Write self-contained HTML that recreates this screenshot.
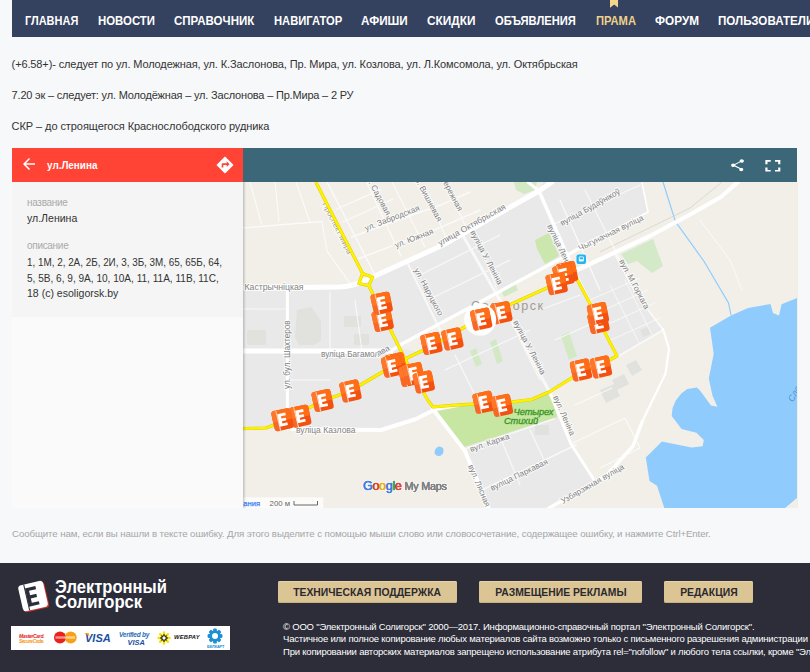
<!DOCTYPE html>
<html lang="ru">
<head>
<meta charset="utf-8">
<title>Электронный Солигорск</title>
<style>
*{margin:0;padding:0;box-sizing:border-box}
html,body{width:810px;height:672px;overflow:hidden;background:#f7f8fa;font-family:"Liberation Sans",sans-serif}
.abs{position:absolute}
#nav{position:absolute;left:12px;top:0;width:798px;height:36.500px;background:#35425f}
#nav span{position:absolute;transform-origin:0 50%;top:13px;font-weight:bold;font-size:13px;line-height:16px;color:#fff;white-space:nowrap}
#nav span.act{color:#eed08c}
.txt{position:absolute;left:11.600px;font-size:11px;line-height:14px;color:#333;white-space:nowrap;letter-spacing:-0.12px}
#mhead-l{position:absolute;left:12px;top:148px;width:231px;height:34px;background:#ff4436}
#mhead-r{position:absolute;left:243px;top:148px;width:554.300px;height:34px;background:#3b6778}
#side{position:absolute;left:12px;top:182px;width:231px;height:325.500px;background:#fafafa;z-index:2}
#sh{position:absolute;left:243px;top:182px;width:3px;height:326px;background:linear-gradient(to right,rgba(0,0,0,.2),rgba(0,0,0,0));z-index:2}
#mhead-l{z-index:3}
#panel{z-index:3;position:absolute;left:12px;top:182px;width:231px;height:135px;background:#f5f5f5}
#map{position:absolute;left:243px;top:182px;width:554.700px;height:326px;background:#f1eee6;overflow:hidden}
#notice{position:absolute;left:12px;top:527.700px;font-size:9.7px;line-height:12px;color:#a6a6a6;white-space:nowrap;letter-spacing:-0.108px}
#footer{position:absolute;left:0;top:563.300px;width:810px;height:109px;background:#2c2d39}
.btn span{display:inline-block;transform:scaleX(0.9);transform-origin:50% 50%}
.btn{position:absolute;top:18px;height:22px;background:#dcc594;color:#2b2930;font-weight:bold;font-size:11.500px;line-height:22.500px;border-radius:2px;box-shadow:inset 0 1px 0 #e6d3a8, inset 0 -1px 0 #c9b07c;text-align:center;white-space:nowrap}
.copy{position:absolute;left:283px;font-size:9.5px;line-height:12px;color:#fff;white-space:nowrap;letter-spacing:-0.2px}
#mtitle{transform:scaleX(.9);transform-origin:0 50%;position:absolute;left:35px;top:9px;font-size:11px;line-height:16px;font-weight:bold;color:#fff;white-space:nowrap}
.lbl{position:absolute;left:15px;font-size:10px;line-height:14px;color:#aaa;white-space:nowrap;letter-spacing:-.3px}
.val{position:absolute;left:15px;font-size:11px;line-height:14px;color:#333;white-space:nowrap;transform-origin:0 50%}
#lg1,#lg2{position:absolute;left:55.200px;font-size:17.500px;line-height:18px;font-weight:bold;color:#fff;white-space:nowrap;transform-origin:0 50%}
#lg1{top:14.400px;transform:scaleX(.947)}#lg2{top:29.600px;transform:scaleX(.95)}
#pay{position:absolute;left:11px;top:62.500px;width:219px;height:24.500px;background:#fff;overflow:hidden}
#pay div{white-space:nowrap}
.pt{font-weight:bold;font-style:italic;transform-origin:0 50%}
</style>
</head>
<body>
<div id="nav">
<svg class="abs" style="left:597.900px;top:0" width="8.400" height="7.800" viewBox="0 0 8.400 7.800"><path d="M0 0h8.400v7.800l-4.200-3.400l-4.200 3.400z" fill="#f3d58e"/></svg>
<span style="left:13.0px;transform:scaleX(0.845)">ГЛАВНАЯ</span>
<span style="left:86.0px;transform:scaleX(0.877)">НОВОСТИ</span>
<span style="left:162.0px;transform:scaleX(0.886)">СПРАВОЧНИК</span>
<span style="left:262.0px;transform:scaleX(0.862)">НАВИГАТОР</span>
<span style="left:349.0px;transform:scaleX(0.900)">АФИШИ</span>
<span style="left:415.3px;transform:scaleX(0.910)">СКИДКИ</span>
<span style="left:483.0px;transform:scaleX(0.859)">ОБЪЯВЛЕНИЯ</span>
<span style="left:584.0px;transform:scaleX(0.860)" class="act">ПРАМА</span>
<span style="left:643.0px;transform:scaleX(0.905)">ФОРУМ</span>
<span style="left:706.3px;transform:scaleX(0.892)">ПОЛЬЗОВАТЕЛИ</span>
</div>
<div class="txt" style="top:57px">(+6.58+)- следует по ул. Молодежная, ул. К.Заслонова, Пр. Мира, ул. Козлова, ул. Л.Комсомола, ул. Октябрьская</div>
<div class="txt" style="top:88px;letter-spacing:-.19px">7.20 эк – следует: ул. Молодёжная – ул. Заслонова – Пр.Мира – 2 РУ</div>
<div class="txt" style="top:119px;letter-spacing:-.075px">СКР – до строящегося Краснослободского рудника</div>
<div id="mhead-l">
<svg class="abs" style="left:7.900px;top:7.400px" width="18" height="18" viewBox="0 0 24 24"><path d="M20 11H7.83l5.59-5.59L12 4l-8 8 8 8 1.41-1.41L7.83 13H20v-2z" fill="#fff"/></svg>
<div id="mtitle">ул.Ленина</div>
<svg class="abs" style="left:203.300px;top:7px" width="20" height="20" viewBox="0 0 24 24"><path d="M21.71 11.29l-9-9a.996.996 0 0 0-1.410 0l-9 9a.996.996 0 0 0 0 1.410l9 9c.39.39 1.020.39 1.410 0l9-9a.996.996 0 0 0 0-1.410zM14 14.500V12h-4v3H8v-4c0-.55.45-1 1-1h5V7.500l3.500 3.500-3.500 3.500z" fill="#fff"/></svg>
</div>
<div id="mhead-r">
<svg class="abs" style="left:485.800px;top:10.400px" width="17" height="14.400" viewBox="0 0 24 24" preserveAspectRatio="none"><path d="M18 16.080c-.76 0-1.440.3-1.960.77L8.910 12.700c.05-.23.090-.46.090-.7s-.04-.47-.09-.7l7.050-4.110c.54.5 1.250.81 2.040.81 1.660 0 3-1.340 3-3s-1.340-3-3-3-3 1.340-3 3c0 .24.040.47.090.7L8.040 9.810C7.500 9.310 6.790 9 6 9c-1.660 0-3 1.340-3 3s1.340 3 3 3c.79 0 1.500-.31 2.040-.81l7.120 4.160c-.5.21-.8.430-.8.650 0 1.610 1.310 2.920 2.920 2.920 1.610 0 2.920-1.310 2.920-2.920s-1.310-2.920-2.920-2.920z" fill="#fff"/></svg>
<svg class="abs" style="left:517.250px;top:7.650px" width="25.700" height="19.700" viewBox="0 0 24 24" preserveAspectRatio="none"><path d="M7 14H5v5h5v-2H7v-3zm-2-4h2V7h3V5H5v5zm12 7h-3v2h5v-5h-2v3zM14 5v2h3v3h2V5h-5z" fill="#fff"/></svg>
</div>
<div id="side"></div><div id="sh"></div>
<div id="panel">
<div class="lbl" style="top:13.500px">название</div>
<div class="val" style="top:29px;transform:scaleX(.958)">ул.Ленина</div>
<div class="lbl" style="top:57px">описание</div>
<div class="val" style="top:72.500px;transform:scaleX(.897)">1, 1М, 2, 2А, 2Б, 2И, 3, 3Б, 3М, 65, 65Б, 64,</div>
<div class="val" style="top:88.500px;transform:scaleX(.915)">5, 5В, 6, 9, 9А, 10, 10А, 11, 11А, 11В, 11С,</div>
<div class="val" style="top:104px;transform:scaleX(.958)">18 (с) esoligorsk.by</div>
</div>
<div id="map">
<svg width="554" height="326" viewBox="243 182 554 326" style="display:block;font-family:'Liberation Sans',sans-serif">
<defs>
<g id="mk"><g transform="rotate(-12)">
<rect x="-9.750" y="-10.250" width="19.500" height="20.500" rx="3" fill="#f4500f"/>
<path d="M-9.750 1V-7.250a3 3 0 0 1 3 -3h13.500a3 3 0 0 1 3 3V1z" fill="#ff6d16"/>
<path d="M-9.750 -7.250a3 3 0 0 1 3 -3h1.900l.5 20.500h-2.400a3 3 0 0 1 -3 -3z" fill="#ff8a45" opacity=".4"/>
<path d="M-5.100 -10.250h.7l.9 20.500h-1.100z" fill="#fff1e6" opacity=".85"/>
<path d="M-4 -6.400h8.200v2.800h-5v2.300h4.500v2.600h-4.500v2.300h5v2.800h-8.200z" fill="#fff"/>
</g></g>
</defs>
<rect x="243" y="182" width="554" height="326" fill="#f2efe9"/>
<path d="M243 290 L352 288 L366 282 L443 247 L539 193 L543 182 L642 182 L648 212 L610 231 L576 250 L582 267 L615 252 L635 292 L663 330 L617 357 L606 362 L549 391 L571 444 L596 483 L549 508 L488 508 L465 451 L435 410 L416 420 L381 430 L243 429 Z" fill="#e9e9e9"/>
<path d="M398 348 L576 250 L582 267 L549 285 L420 352 Z" fill="#f2efe9"/>
<g fill="#e1e1de"><path d="M297 310l14-3 10 14v20l-8 4h-14l-4-8z"/><rect x="247" y="330" width="19" height="15" rx="2"/><rect x="344" y="316" width="17" height="11" rx="1"/><rect x="354" y="334" width="15" height="11" rx="1"/><path d="M626 365l10-5 6 10-10 6z M612 380l12-6 5 10-12 6z M640 330l8-3 3 7-8 3z M600 390l14-6 6 12-14 7z"/><rect x="535" y="425" width="14" height="10"/></g>
<g fill="#d3e9c6">
<path d="M535 240 L549 233 L559 256 L545 264 L537 249 Z" fill="#cbe7ae"/>
<path d="M621 254 L653 239 L663 266 L652 273 L637 261 L628 264 Z" fill="#d3e9c8"/>
<path d="M514 182 L537 182 L535 190 L524 194 L516 190 Z"/>
<path d="M470 351 L476 348 L482 364 L476 367 Z"/>
<path d="M490 342 L496 339 L503 361 L497 364 Z"/>
<path d="M561 336 L569 332 L577 356 L569 360 Z"/>
<path d="M501 290 L515 283 L518 290 L504 297 Z"/>
</g>
<path d="M433 410 L458 406 L507 403.500 L532 400.500 L551 392.500 L557 417 L464 447 L437 412 Z" fill="#c6e6a2"/>
<path d="M797 298 L781.600 304.300 L779 315.500 L773 313 L770.500 304 L748 308 L731 315.500 L710 327.800 L713.700 353.700 L708.800 378.400 L712.500 395.700 L717.400 406.800 L711 405.600 L700 390.400 L697 387.600 L687.400 388.900 L681.500 393.300 L675.600 400.700 L672.600 408 L671.700 416 L681.600 429 L696.400 432.700 L703.800 440 L702.600 446.300 L691.500 447.600 L661.900 441.400 L645.800 457.400 L649.500 480.900 L657 485.800 L664.300 508 L785 508 L797 498 Z" fill="#8fccfd"/>
<path d="M435 450 q3 -6 8 -2 q2 5 -3 8 q-7 0 -5 -6z" fill="#8fccfd"/>
<path d="M663 182 L675.400 221.500 L703.800 261 L728.500 303 L731 315" fill="none" stroke="#8fccfd" stroke-width="1.200"/>
<path d="M600 252 L690 208 L722 182" fill="none" stroke="#dcd9d2" stroke-width="1"/>
<g fill="none" stroke="#fff" stroke-linecap="round" stroke-linejoin="round" opacity=".72">
<path d="M250 182 L261.500 224" stroke-width="1.2"/>
<path d="M275 182 L279 221" stroke-width="1.2"/>
<path d="M296 182 L309.700 221.500" stroke-width="1.2"/>
<path d="M243 228 L322 221.500" stroke-width="1.5"/>
<path d="M322 222.700 L327 251 L351.600 285.700" stroke-width="1.2"/>
<path d="M327 182 L374 273" stroke-width="1.5"/>
<path d="M336.800 209 L381 189.400" stroke-width="1.3"/>
<path d="M343 222 L393 199" stroke-width="1.3"/>
<path d="M351.600 237 L443 204 L470 192" stroke-width="1.5"/>
<path d="M359 258.500 L443 226.400 L480 210" stroke-width="1.5"/>
<path d="M366.500 182 L401 256" stroke-width="1.5"/>
<path d="M392 182 L425 247" stroke-width="1.2"/>
<path d="M416 182 L438 219 L447 240" stroke-width="1.5"/>
<path d="M443 182 L460 214 L468 232" stroke-width="1.5"/>
<path d="M407 262 L440 330" stroke-width="2"/>
<path d="M462 234 L509.500 317 L549 391" stroke-width="3"/>
<path d="M615 254 L635 292 L663 330" stroke-width="2"/>
<path d="M663 330 L617 357" stroke-width="2"/>
<path d="M465 449 L554 419" stroke-width="1.6"/>
<path d="M482 490 L576 445" stroke-width="1.6"/>
<path d="M500 437 L520 485" stroke-width="1.2"/>
<path d="M530 430 L545 462" stroke-width="1.2"/>
<path d="M571 444 L625 418 L640 448 L600 468" stroke-width="1.2"/>
<path d="M575 405 L612 388" stroke-width="1.2"/>
<path d="M243 309 L287 309" stroke-width="1.2"/>
<path d="M287 380 L330 380" stroke-width="1.2"/>
<path d="M330 292 L330 351" stroke-width="1.2"/>
<path d="M355 300 L362 351" stroke-width="1.2"/>
<path d="M420 275 L500 235" stroke-width="1.2"/>
<path d="M432 298 L510 260" stroke-width="1.2"/>
<path d="M480 245 L497 290" stroke-width="1.2"/>
<path d="M560 200 L600 290" stroke-width="1.5"/>
<path d="M585 190 L625 270" stroke-width="1.2"/>
<path d="M552 225 L640 185" stroke-width="1.2"/>
<path d="M590 300 L640 278" stroke-width="1"/>
<path d="M597 313 L648 290" stroke-width="1"/>
<path d="M604 326 L655 303" stroke-width="1"/>
<path d="M611 340 L660 318" stroke-width="1"/>
<path d="M610 285 L640 345" stroke-width="1"/>
<path d="M625 280 L652 335" stroke-width="1"/>
<path d="M455 355 L475 395" stroke-width="1.2"/>
<path d="M520 340 L540 380" stroke-width="1.2"/>
<path d="M445 370 L530 330" stroke-width="1.2"/>
<path d="M540 310 L580 295" stroke-width="1.2"/>
<path d="M555 340 L600 320" stroke-width="1.2"/>
<path d="M700 220 L730 260 L742 290" stroke-width="1"/>
</g>
<g fill="none" stroke="#fff" stroke-linecap="round" stroke-linejoin="round">
<path d="M243 288 L340 287 Q355 286 366 280 L443 245 L539 191 L552 182" stroke-width="5"/>
<path d="M539 191 L528 182" stroke-width="3"/>
<path d="M539 191 L575 273 L591 305 L617 356" stroke-width="3.5"/>
<path d="M391 351 L400 345 L571 253 L600 237" stroke-width="3.2"/>
<path d="M600 237 L648 212 L642 183" stroke-width="1.6"/>
<path d="M573 272 L650 236 L691 214 L721 197 L738 182" stroke-width="4.2"/>
<path d="M243 351 L391 351" stroke-width="5"/>
<path d="M287.400 288 L287.400 429" stroke-width="3"/>
<path d="M292 429 L381 430 L416 419 L436 409 L458 405" stroke-width="4"/>
<path d="M433 409 L465 451 L488.600 508" stroke-width="4"/>
<path d="M549 508 L606 476 L633 446 L642 422" stroke-width="3.5"/>
<path d="M642 422 L665.500 373.500 L669 348.800 L663 329" stroke-width="2.2"/>
<path d="M549 391 L571 444 L596 483" stroke-width="3"/>
</g>
<g stroke="#fff" stroke-width="2" paint-order="stroke" stroke-opacity=".7">
<text x="244.5" y="290" transform="rotate(0 244.5 290)" font-size="8.7" fill="#828282" >Кастрычніцкая</text>
<text x="364.5" y="175" transform="rotate(62 364.5 175)" font-size="8.2" fill="#828282" >ул. Садовая</text>
<text x="366" y="231" transform="rotate(-21 366 231)" font-size="8.2" fill="#828282" >ул. Забродская</text>
<text x="396" y="248" transform="rotate(-21 396 248)" font-size="8.2" fill="#828282" >ул. Южная</text>
<text x="413" y="176" transform="rotate(62 413 176)" font-size="8.2" fill="#828282" >ул. Вишневая</text>
<text x="443" y="183" transform="rotate(62 443 183)" font-size="8.2" fill="#828282" >ережная</text>
<text x="440" y="246" transform="rotate(-29.5 440 246)" font-size="8.5" fill="#828282" >улица Октябрьская</text>
<text x="414" y="270" transform="rotate(62 414 270)" font-size="8.2" fill="#828282" >ул. Наруцкого</text>
<text x="470" y="232" transform="rotate(62 470 232)" font-size="8.2" fill="#828282" >вуліца У. Ленiна</text>
<text x="562" y="226" transform="rotate(-29 562 226)" font-size="8.2" fill="#828282" >вуліца Будаўнікоў</text>
<text x="580" y="251" transform="rotate(-26 580 251)" font-size="8.2" fill="#828282" >Чыгуначная вуліца</text>
<text x="547" y="226" transform="rotate(64 547 226)" font-size="8.2" fill="#828282" >вуліца Лен</text>
<text x="619" y="261" transform="rotate(62 619 261)" font-size="8.2" fill="#828282" >вул. М.Горкага</text>
<text x="290" y="389" transform="rotate(-90 290 389)" font-size="8.2" fill="#828282" >ул. бул. Шахтеров</text>
<text x="321" y="357" transform="rotate(0 321 357)" font-size="8.2" fill="#828282" >вуліца Багамол</text>
<text x="378.5" y="356" transform="rotate(-27 378.5 356)" font-size="8.2" fill="#828282" >ава</text>
<text x="296" y="432.5" transform="rotate(0 296 432.5)" font-size="8.5" fill="#828282" >вуліца Казлова</text>
<text x="471" y="452" transform="rotate(-19 471 452)" font-size="8.2" fill="#828282" >вул. Каржа</text>
<text x="468" y="466" transform="rotate(67 468 466)" font-size="8.2" fill="#828282" >вул. Лясная</text>
<text x="492" y="491" transform="rotate(-26 492 491)" font-size="8.2" fill="#828282" >вуліца Паркавая</text>
<text x="563" y="504" transform="rotate(-30 563 504)" font-size="8.2" fill="#828282" >Узбярэжная вуліца</text>
<text x="513" y="322" transform="rotate(62 513 322)" font-size="8.2" fill="#828282" >вуліца У. Ленiна</text>
<text x="553" y="397" transform="rotate(66 553 397)" font-size="8.2" fill="#828282" >вул. Ленiна</text>
<text x="322" y="204" transform="rotate(63 322 204)" font-size="8" fill="#a8a38f" >Проспект Мира</text>
</g>
<text x="471" y="309.5" transform="rotate(0 471 309.5)" font-size="12.5" fill="#a39b90" letter-spacing="1.5">Солигорск</text>
<text x="513.5" y="415" transform="rotate(0 513.5 415)" font-size="9.3" fill="#3c9628" font-style="italic" stroke="#3c9628" stroke-width=".35" letter-spacing="-.1">Четырех</text>
<text x="504" y="424.3" transform="rotate(0 504 424.3)" font-size="9.3" fill="#3c9628" font-style="italic" stroke="#3c9628" stroke-width=".35" letter-spacing="-.1">Стихий</text>
<text x="793" y="402.5" transform="rotate(-62 793 402.5)" font-size="9" fill="#4a90d9" font-style="italic">Сло</text>
<rect x="576.500" y="254.500" width="9.500" height="9.500" rx="2" fill="#1fb6f2"/><rect x="578.800" y="256.500" width="5" height="5" rx="1" fill="#fff"/><rect x="579.600" y="257.300" width="3.400" height="2" fill="#1fb6f2"/>
<path d="M315.8 182 L362.6 273.5 L358.9 283.5 L368.9 285.7 L372.6 277.2 L362.6 273.5 L358.9 283.5 L368.9 285.7 L373.9 296 L389.6 328 L405 359 L428 400.6 L433 407 L458 404.8 L507 402.6 L531.8 399.5 L550 391.5 L571 378.4 L606 362 L617 356 L591 305.5 L573.7 273 L549 287 L507 306 L480 318 L458 331 L434 345 L405 359 L350 391 L323 401 L300.3 412 L274 425 L266 428 L243 428.6" fill="none" stroke="#dccb00" stroke-width="3.200" stroke-linejoin="round"/>
<path d="M315.8 182 L362.6 273.5 L358.9 283.5 L368.9 285.7 L372.6 277.2 L362.6 273.5 L358.9 283.5 L368.9 285.7 L373.9 296 L389.6 328 L405 359 L428 400.6 L433 407 L458 404.8 L507 402.6 L531.8 399.5 L550 391.5 L571 378.4 L606 362 L617 356 L591 305.5 L573.7 273 L549 287 L507 306 L480 318 L458 331 L434 345 L405 359 L350 391 L323 401 L300.3 412 L274 425 L266 428 L243 428.6" fill="none" stroke="#fff200" stroke-width="2.300" stroke-linejoin="round"/>
<use href="#mk" x="501.400" y="312.700"/>
<circle cx="480.200" cy="319.600" r="16" fill="#fff"/>
<use href="#mk" x="382.7" y="320.5"/>
<use href="#mk" x="381.7" y="303.2"/>
<use href="#mk" x="452.5" y="339"/>
<use href="#mk" x="431.5" y="343.5"/>
<use href="#mk" x="567" y="272.5"/>
<use href="#mk" x="563.5" y="275"/>
<use href="#mk" x="556.7" y="283.6"/>
<use href="#mk" x="598.5" y="322.5"/>
<use href="#mk" x="598" y="313.5"/>
<use href="#mk" x="601" y="367"/>
<use href="#mk" x="581" y="370"/>
<use href="#mk" x="395.7" y="363.8"/>
<use href="#mk" x="392.2" y="366.2"/>
<use href="#mk" x="409.5" y="375.5"/>
<use href="#mk" x="413.5" y="373.6"/>
<use href="#mk" x="423.8" y="382"/>
<use href="#mk" x="350.5" y="391"/>
<use href="#mk" x="322.6" y="400.5"/>
<use href="#mk" x="300.3" y="416.2"/>
<use href="#mk" x="282.5" y="419.7"/>
<use href="#mk" x="483.6" y="402.3"/>
<use href="#mk" x="502" y="405.4"/>
<use href="#mk" x="481.200" y="319.100"/>
<g font-size="12.500" stroke="#fff" stroke-opacity=".75" stroke-width="2.200" paint-order="stroke" stroke-linejoin="round"><text x="363" y="490" letter-spacing="-.3">Google</text><text x="404.600" y="490" font-size="10.800" letter-spacing="-.25">My Maps</text></g>
<g font-size="12.500"><text x="363" y="490" letter-spacing="-.3" stroke-width=".45"><tspan fill="#4285f4" stroke="#4285f4">G</tspan><tspan fill="#ea4335" stroke="#ea4335">o</tspan><tspan fill="#fbbc05" stroke="#fbbc05">o</tspan><tspan fill="#4285f4" stroke="#4285f4">g</tspan><tspan fill="#34a853" stroke="#34a853">l</tspan><tspan fill="#ea4335" stroke="#ea4335">e</tspan></text><text x="404.600" y="490" font-size="10.800" fill="#8a8a8a" stroke="#8a8a8a" stroke-width=".3" letter-spacing="-.25">My Maps</text></g>
<rect x="243" y="497.300" width="80.300" height="11" fill="#fff" opacity=".72"/>
<text x="243.300" y="505.500" font-size="7.600" fill="#3f83f5" stroke="#3f83f5" stroke-width=".25">ания</text><text x="269.600" y="505.500" font-size="7.800" fill="#666">200 м</text><path d="M294 501 v4 h23.500 v-4" fill="none" stroke="#666" stroke-width="1"/>
</svg>
</div><!--/map-->
<div id="notice">Сообщите нам, если вы нашли в тексте ошибку. Для этого выделите с помощью мыши слово или словосочетание, содержащее ошибку, и нажмите Ctrl+Enter.</div>
<div id="footer">
<svg class="abs" style="left:14px;top:13px" width="40" height="40" viewBox="14 576 40 40">
<g transform="rotate(-13 33.600 596.300)">
<rect x="21.300" y="583.800" width="25.600" height="26.600" rx="3.500" fill="#c8322b"/>
<rect x="20.300" y="582.600" width="25.600" height="26.600" rx="3.500" fill="#fff"/>
<path d="M26.600 582.600v26.600" stroke="#2c2d39" stroke-width="1"/>
<path d="M26.800 586.700h10.800v3.200h-7.200v4.600h6.400v3.200h-6.400v4.600h7.200v3.200h-10.800z" fill="#2c2d39"/>
</g></svg>
<div id="lg1">Электронный</div><div id="lg2">Солигорск</div>
<div id="pay">
<div class="abs pt" id="p1" style="left:8px;top:6.800px;font-size:5.500px;line-height:6px;color:#e2231a;letter-spacing:-.35px;transform:scaleX(.9)">MasterCard.</div>
<div class="abs pt" id="p2" style="left:8px;top:12.200px;font-size:5.500px;line-height:6px;color:#f79410;letter-spacing:-.35px;transform:scaleX(.84)">SecureCode.</div>
<svg class="abs" style="left:42px;top:4.500px" width="26" height="15" viewBox="0 0 26 15"><circle cx="7" cy="7.500" r="6" fill="#e8231c"/><circle cx="17.700" cy="7.500" r="6" fill="#f9a01b"/><path d="M12.350 4.800a6 6 0 0 1 0 5.400a6 6 0 0 1 0 -5.400z" fill="#f0601a"/><rect x="2.500" y="6.300" width="19.500" height="2.400" fill="#fff" opacity=".5"/></svg>
<div class="abs pt" id="p3" style="left:73.800px;top:6.500px;font-size:11.600px;line-height:12px;color:#1c4fa1;transform:scaleX(.95)">VISA</div>
<svg class="abs" style="left:73px;top:7.500px" width="6" height="4" viewBox="0 0 6 4"><path d="M0 0h4.500l1.200 3.500q-2.500-2.500-5.700-3.500z" fill="#f7a800"/></svg>
<div class="abs pt" id="p4" style="left:108px;top:5px;font-size:7px;line-height:8px;color:#2a6cb8;letter-spacing:-.3px;transform:scaleX(.93)">Verified by</div>
<div class="abs pt" id="p5" style="left:116.600px;top:12.800px;font-size:7.400px;line-height:8px;color:#1c4fa1">VISA</div>
<svg class="abs" style="left:145px;top:4.100px" width="16" height="16" viewBox="-8 -8 16 16"><g stroke="#f2e100" stroke-width="2.300" stroke-linecap="round"><path d="M0-5.500v11M-5.500 0h11M-3.900-3.900l7.800 7.800M-3.900 3.900l7.800-7.800"/></g><g stroke="#1a1a1a" stroke-width="1.400" stroke-linecap="round"><path d="M0-3.200v6.400M-3.200 0h6.400M-2.100-2.100l4.200 4.200M-2.100 2.100l4.200-4.200"/></g><circle r="1.700" fill="#fff"/></svg>
<div class="abs pt" id="p6" style="left:162.500px;top:9.200px;font-size:4.600px;line-height:6px;color:#111;letter-spacing:.2px;transform:scaleX(1.250)">WEBPAY</div>
<svg class="abs" style="left:196.300px;top:2px" width="16" height="16" viewBox="-8 -8 16 16"><g fill="#1e8fd5"><circle r="5.300"/><rect x="-1.900" y="-7.400" width="3.800" height="14.800" rx="1.200"/><rect x="-1.900" y="-7.400" width="3.800" height="14.800" rx="1.200" transform="rotate(45)"/><rect x="-1.900" y="-7.400" width="3.800" height="14.800" rx="1.200" transform="rotate(90)"/><rect x="-1.900" y="-7.400" width="3.800" height="14.800" rx="1.200" transform="rotate(135)"/></g><circle r="3" fill="#fff"/></svg>
<div class="abs pt" id="p7" style="left:195.600px;top:18.200px;font-size:4.300px;line-height:5px;font-style:normal;color:#1e8fd5;letter-spacing:-.15px;transform:scaleX(.9)">БЕЛКАРТ</div>
</div>
<div class="btn" style="left:278px;width:179px"><span id="b1">ТЕХНИЧЕСКАЯ ПОДДЕРЖКА</span></div>
<div class="btn" style="left:479px;width:163px"><span id="b2">РАЗМЕЩЕНИЕ РЕКЛАМЫ</span></div>
<div class="btn" style="left:664px;width:89px"><span id="b3">РЕДАКЦИЯ</span></div>
<div class="copy" id="c1" style="top:58px">© ООО "Электронный Солигорск" 2000—2017. Информационно-справочный портал "Электронный Солигорск".</div>
<div class="copy" id="c2" style="top:70px">Частичное или полное копирование любых материалов сайта возможно только с письменного разрешения администрации сайта.</div>
<div class="copy" id="c3" style="top:83px">При копировании авторских материалов запрещено использование атрибута rel="nofollow" и любого тела ссылки, кроме "Электронный Солигорск".</div>
</div>
</body>
</html>
